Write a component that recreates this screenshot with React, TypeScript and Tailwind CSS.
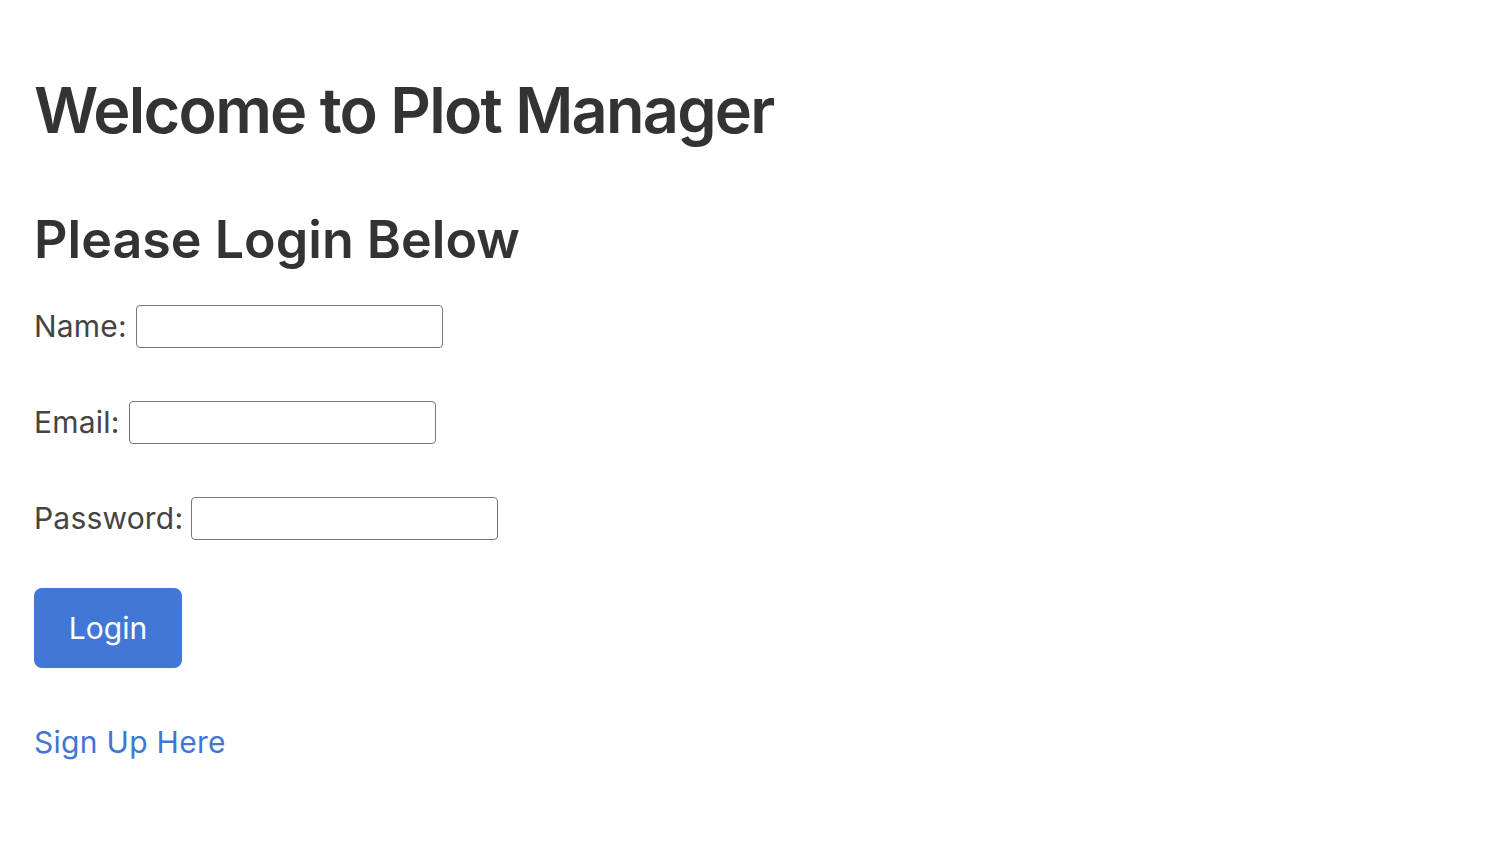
export default function App() {
  return (
    <div className="min-h-screen bg-white px-[34px] pt-[72px] text-[#333333]" style={{ fontFamily: 'Inter, "Noto Sans", sans-serif' }}>
      <h1 className="text-[63px] font-semibold leading-[76px] tracking-[-1.75px]">Welcome to Plot Manager</h1>
      <h2 className="mt-[61px] text-[52px] font-semibold leading-[62px] tracking-[0px]">Please Login Below</h2>
      <form className="mt-[33px]" onSubmit={(e) => e.preventDefault()}>
        <div className="flex h-[44px] items-center text-[30px] tracking-[0.2px] text-[#444444]">
          <label htmlFor="name">Name:</label>
          <input id="name" type="text" className="ml-[9px] h-[43px] w-[307px] rounded-[4px] border border-[#767676] px-2" />
        </div>
        <div className="mt-[52px] flex h-[44px] items-center text-[30px] tracking-[0.2px] text-[#444444]">
          <label htmlFor="email">Email:</label>
          <input id="email" type="email" className="ml-[9px] h-[43px] w-[307px] rounded-[4px] border border-[#767676] px-2" />
        </div>
        <div className="mt-[52px] flex h-[44px] items-center text-[30px] tracking-[0.2px] text-[#444444]">
          <label htmlFor="password">Password:</label>
          <input id="password" type="password" className="ml-[8px] h-[43px] w-[307px] rounded-[4px] border border-[#767676] px-2" />
        </div>
        <button type="submit" className="mt-[48px] h-[80px] w-[148px] rounded-[8px] bg-[#4177d6] text-[30px] text-white">
          Login
        </button>
      </form>
      <a href="#" className="mt-[56px] block text-[30px] leading-[36px] tracking-[0.3px] text-[#3f76d4]">
        Sign Up Here
      </a>
    </div>
  );
}
